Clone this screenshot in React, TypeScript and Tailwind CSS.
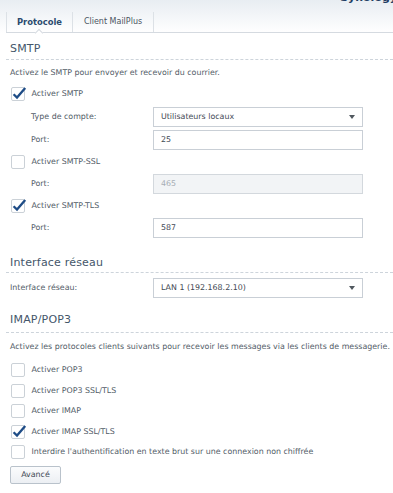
const Check = () => (
  <svg width="16" height="15" viewBox="0 0 16 15" className="absolute left-[-1px] top-[-2px]">
    <path d="M2.6 8.2 L6 11.6 L14.2 2" fill="none" stroke="#1e4c86" strokeWidth="2.3" />
  </svg>
)

const Box = ({ checked }: { checked?: boolean }) => (
  <span className="relative block h-[14px] w-[14px] shrink-0 rounded-[2px] border border-[#cbd1d7] bg-white">
    {checked && <Check />}
  </span>
)

const CheckRow = ({ label, checked, h = "h-[20px]", mt }: { label: string; checked?: boolean; h?: string; mt: string }) => (
  <div className={`flex items-center gap-[6.5px] pl-[5px] ${h} ${mt}`}>
    <Box checked={checked} />
    <span>{label}</span>
  </div>
)

const Caret = () => (
  <span className="h-0 w-0 border-x-[3px] border-t-[4px] border-x-transparent border-t-[#50585f]" />
)

const Field = ({ value, select, disabled }: { value: string; select?: boolean; disabled?: boolean }) => (
  <div
    className={`flex h-[20px] w-[210px] items-center justify-between border pl-[7px] pr-[7px] ${
      disabled ? "border-[#d3d8dd] bg-[#f2f4f6] text-[#a7aeb5]" : "border-[#c9cfd6] bg-white text-[#3f4954]"
    }`}
  >
    <span>{value}</span>
    {select && <Caret />}
  </div>
)

const FieldRow = ({ label, mt, indent = true, ...f }: { label: string; mt: string; indent?: boolean; value: string; select?: boolean; disabled?: boolean }) => (
  <div className={`flex h-[20px] items-center ${mt}`}>
    <span className={`w-[147px] shrink-0 ${indent ? "pl-[25px]" : "pl-[4px]"}`}>{label}</span>
    <Field {...f} />
  </div>
)

const Heading = ({ title, cls }: { title: string; cls: string }) => (
  <div className={`flex items-end border-b border-dashed border-[#cdd4db] pl-[4px] text-[11px] leading-[14px] tracking-[0.2px] text-[#44566a] ${cls}`}>
    {title}
  </div>
)

export default function App() {
  return (
    <div className="relative h-[493px] w-[393px] overflow-hidden bg-white font-['DejaVu_Sans',sans-serif] text-[7.9px] leading-[10px] text-[#525c67]">
      {/* header + tabs */}
      <div className="bg-linear-to-b from-[#e8edf2] to-white pt-[12px]">
        <span className="absolute right-[-4px] top-[-8px] text-[11px] font-bold leading-[12px] text-[#1f3d63]">Synology</span>
        <div className="ml-[6px] flex h-[21px] border-b border-[#d5dae0]">
          <div className="relative flex w-[67px] items-center justify-center border-x border-[#dce1e6] text-[8.4px] font-bold text-[#2c4b6f]">
            Protocole
            <span className="absolute bottom-[-4px] left-[29px] h-[6px] w-[6px] rotate-45 border-l border-t border-[#d5dae0] bg-white" />
          </div>
          <div className="flex w-[81px] items-center justify-center border-r border-[#dce1e6] text-[8px] text-[#4b5562]">
            Client MailPlus
          </div>
        </div>
      </div>

      <div className="ml-[6px]">
        <Heading title="SMTP" cls="h-[27px] pb-[3px]" />
        <div className="mt-[3px] flex h-[20px] items-center pl-[4px]">Activez le SMTP pour envoyer et recevoir du courrier.</div>
        <CheckRow label="Activer SMTP" checked mt="mt-[1px]" />
        <FieldRow label="Type de compte:" value="Utilisateurs locaux" select mt="mt-[3px]" />
        <FieldRow label="Port:" value="25" mt="mt-[3px]" />
        <CheckRow label="Activer SMTP-SSL" mt="mt-[2px]" />
        <FieldRow label="Port:" value="465" disabled mt="mt-[2px]" />
        <CheckRow label="Activer SMTP-TLS" checked mt="mt-[2px]" />
        <FieldRow label="Port:" value="587" mt="mt-[2px]" />

        <Heading title="Interface réseau" cls="h-[35px] pb-[2px]" />
        <FieldRow label="Interface réseau:" value="LAN 1 (192.168.2.10)" select indent={false} mt="mt-[5px]" />

        <Heading title="IMAP/POP3" cls="h-[35px] pb-[5px]" />
        <div className="mt-[4px] flex h-[20px] items-center whitespace-nowrap pl-[4px]">
          Activez les protocoles clients suivants pour recevoir les messages via les clients de messagerie.
        </div>
        <CheckRow label="Activer POP3" h="h-[20.5px]" mt="mt-[3px]" />
        <CheckRow label="Activer POP3 SSL/TLS" h="h-[20.5px]" mt="mt-0" />
        <CheckRow label="Activer IMAP" h="h-[20.5px]" mt="mt-0" />
        <CheckRow label="Activer IMAP SSL/TLS" checked h="h-[20.5px]" mt="mt-0" />
        <CheckRow label="Interdire l'authentification en texte brut sur une connexion non chiffrée" h="h-[20.5px]" mt="mt-0" />
        <button className="ml-[4px] mt-[3px] flex h-[18px] w-[51px] items-center justify-center rounded-[2px] border border-[#b9c2cb] bg-linear-to-b from-[#fbfcfd] to-[#eceff3] text-[#3f4955]">
          Avancé
        </button>
      </div>
    </div>
  )
}
